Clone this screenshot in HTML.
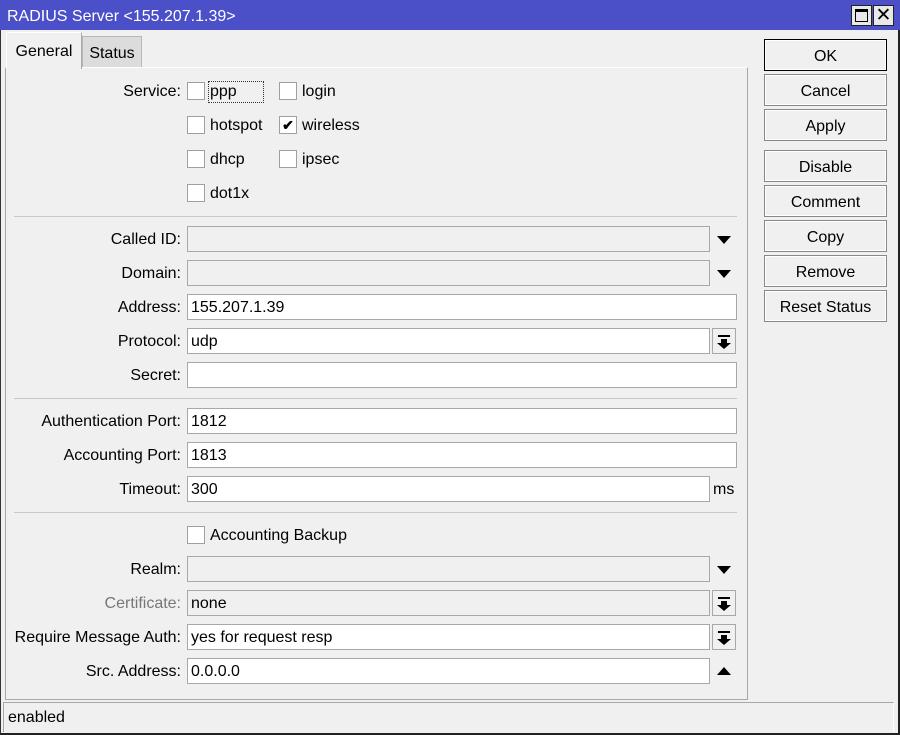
<!DOCTYPE html>
<html><head><style>
*{margin:0;padding:0;box-sizing:border-box}
body{width:900px;height:735px;background:#f0f0f0;font-family:"Liberation Sans",sans-serif;font-size:16px;color:#000;position:relative;overflow:hidden}
.a{position:absolute}
#win{left:0;top:0;width:900px;height:735px;border:1px solid #333;border-top:none;border-bottom:2px solid #222;border-right:2px solid #222}
#title{left:0;top:0;width:900px;height:30px;background:#4b4fc8;color:#fff;font-size:16px;line-height:33px;padding-left:7px}
.tb{top:5px;width:21px;height:21px;background:#e8e8e8;border:1px solid #222}
.lab{right:719px;text-align:right;white-space:nowrap;line-height:28px}
.f{left:187px;height:26px;background:#fff;border:1px solid #a8a8a8;line-height:26px;padding-left:3px}
.f.g{background:#f0f0f0}
.cb{width:18px;height:18px;background:#fff;border:1px solid #a0a0a0}
.cl{line-height:20px}
.sep{left:14px;width:723px;height:1px;background:#c8c8c8}
.btn{left:764px;width:123px;height:32px;border:1px solid #888;background:#f0f0f0;text-align:center;line-height:33px;box-shadow:inset 0 0 0 1px #fff}
.dd{width:24px;height:26px;border:1px solid #a8a8a8;background:#f0f0f0}
.tri{width:0;height:0;border-left:7px solid transparent;border-right:7px solid transparent}
</style></head><body>
<div class="a" id="win"></div>
<div class="a" id="title">RADIUS Server &lt;155.207.1.39&gt;</div>
<div class="a tb" style="left:851px"><div class="a" style="left:3px;top:3px;width:13px;height:13px;border:1px solid #000;border-top:3px solid #000"></div></div>
<div class="a tb" style="left:873px;text-align:center;line-height:19px;font-size:19px;color:#000">✕</div>

<div class="a" style="left:5px;top:67px;width:743px;height:633px;border:1px solid #a8a8a8;border-top:1px solid #fff"></div>
<div class="a" style="left:82px;top:36px;width:60px;height:31px;background:#dcdcdc;border:1px solid #b8b8b8;border-bottom:none;line-height:33px;text-align:center">Status</div>
<div class="a" style="left:6px;top:32px;width:76px;height:37px;background:#f0f0f0;border:1px solid #fff;border-right:1px solid #a8a8a8;border-bottom:none;line-height:38px;text-align:center">General</div>

<div class="a lab" style="top:78px">Service:</div>
<div class="a cb" style="left:187px;top:82px"></div><div class="a cl" style="left:208px;top:81px;border:1px dotted #333;padding:0 26px 0 1px">ppp</div>
<div class="a cb" style="left:279px;top:82px"></div><div class="a cl" style="left:302px;top:82px">login</div>
<div class="a cb" style="left:187px;top:116px"></div><div class="a cl" style="left:210px;top:116px">hotspot</div>
<div class="a cb" style="left:279px;top:116px;font-size:14px;line-height:17px;text-align:center;font-weight:bold">✔</div><div class="a cl" style="left:302px;top:116px">wireless</div>
<div class="a cb" style="left:187px;top:150px"></div><div class="a cl" style="left:210px;top:150px">dhcp</div>
<div class="a cb" style="left:279px;top:150px"></div><div class="a cl" style="left:302px;top:150px">ipsec</div>
<div class="a cb" style="left:187px;top:184px"></div><div class="a cl" style="left:210px;top:184px">dot1x</div>
<div class="a sep" style="top:216px"></div>

<div class="a lab" style="top:226px">Called ID:</div><div class="a f g" style="top:226px;width:523px"></div>
<div class="a tri" style="left:717px;top:236px;border-top:8px solid #000"></div>
<div class="a lab" style="top:260px">Domain:</div><div class="a f g" style="top:260px;width:523px"></div>
<div class="a tri" style="left:717px;top:270px;border-top:8px solid #000"></div>
<div class="a lab" style="top:294px">Address:</div><div class="a f" style="top:294px;width:550px">155.207.1.39</div>
<div class="a lab" style="top:328px">Protocol:</div><div class="a f" style="top:328px;width:523px">udp</div>
<div class="a dd" style="left:712px;top:328px"><div class="a" style="left:5px;top:6px;width:12px;height:2px;background:#000"></div><div class="a" style="left:8px;top:10px;width:6px;height:4px;background:#000"></div><div class="a tri" style="left:4px;top:14px;border-top:6px solid #000"></div></div>
<div class="a lab" style="top:362px">Secret:</div><div class="a f" style="top:362px;width:550px"></div>
<div class="a sep" style="top:398px"></div>

<div class="a lab" style="top:408px">Authentication Port:</div><div class="a f" style="top:408px;width:550px">1812</div>
<div class="a lab" style="top:442px">Accounting Port:</div><div class="a f" style="top:442px;width:550px">1813</div>
<div class="a lab" style="top:476px">Timeout:</div><div class="a f" style="top:476px;width:523px">300</div>
<div class="a" style="left:713px;top:476px;line-height:28px">ms</div>
<div class="a sep" style="top:512px"></div>

<div class="a cb" style="left:187px;top:526px"></div><div class="a cl" style="left:210px;top:526px">Accounting Backup</div>
<div class="a lab" style="top:556px">Realm:</div><div class="a f g" style="top:556px;width:523px"></div>
<div class="a tri" style="left:717px;top:566px;border-top:8px solid #000"></div>
<div class="a lab" style="top:590px;color:#777">Certificate:</div><div class="a f g" style="top:590px;width:523px">none</div>
<div class="a dd" style="left:712px;top:590px"><div class="a" style="left:5px;top:6px;width:12px;height:2px;background:#000"></div><div class="a" style="left:8px;top:10px;width:6px;height:4px;background:#000"></div><div class="a tri" style="left:4px;top:14px;border-top:6px solid #000"></div></div>
<div class="a lab" style="top:624px">Require Message Auth:</div><div class="a f" style="top:624px;width:523px">yes for request resp</div>
<div class="a dd" style="left:712px;top:624px"><div class="a" style="left:5px;top:6px;width:12px;height:2px;background:#000"></div><div class="a" style="left:8px;top:10px;width:6px;height:4px;background:#000"></div><div class="a tri" style="left:4px;top:14px;border-top:6px solid #000"></div></div>
<div class="a lab" style="top:658px">Src. Address:</div><div class="a f" style="top:658px;width:523px">0.0.0.0</div>
<div class="a tri" style="left:717px;top:667px;border-bottom:8px solid #000"></div>

<div class="a btn" style="top:39px;border-color:#000">OK</div>
<div class="a btn" style="top:74px">Cancel</div>
<div class="a btn" style="top:109px">Apply</div>
<div class="a btn" style="top:150px">Disable</div>
<div class="a btn" style="top:185px">Comment</div>
<div class="a btn" style="top:220px">Copy</div>
<div class="a btn" style="top:255px">Remove</div>
<div class="a btn" style="top:290px">Reset Status</div>

<div class="a" style="left:3px;top:702px;width:891px;height:30px;border-top:1px solid #a8a8a8;border-left:1px solid #a8a8a8;border-right:1px solid #fff;line-height:30px;padding-left:4px">enabled</div>
</body></html>
